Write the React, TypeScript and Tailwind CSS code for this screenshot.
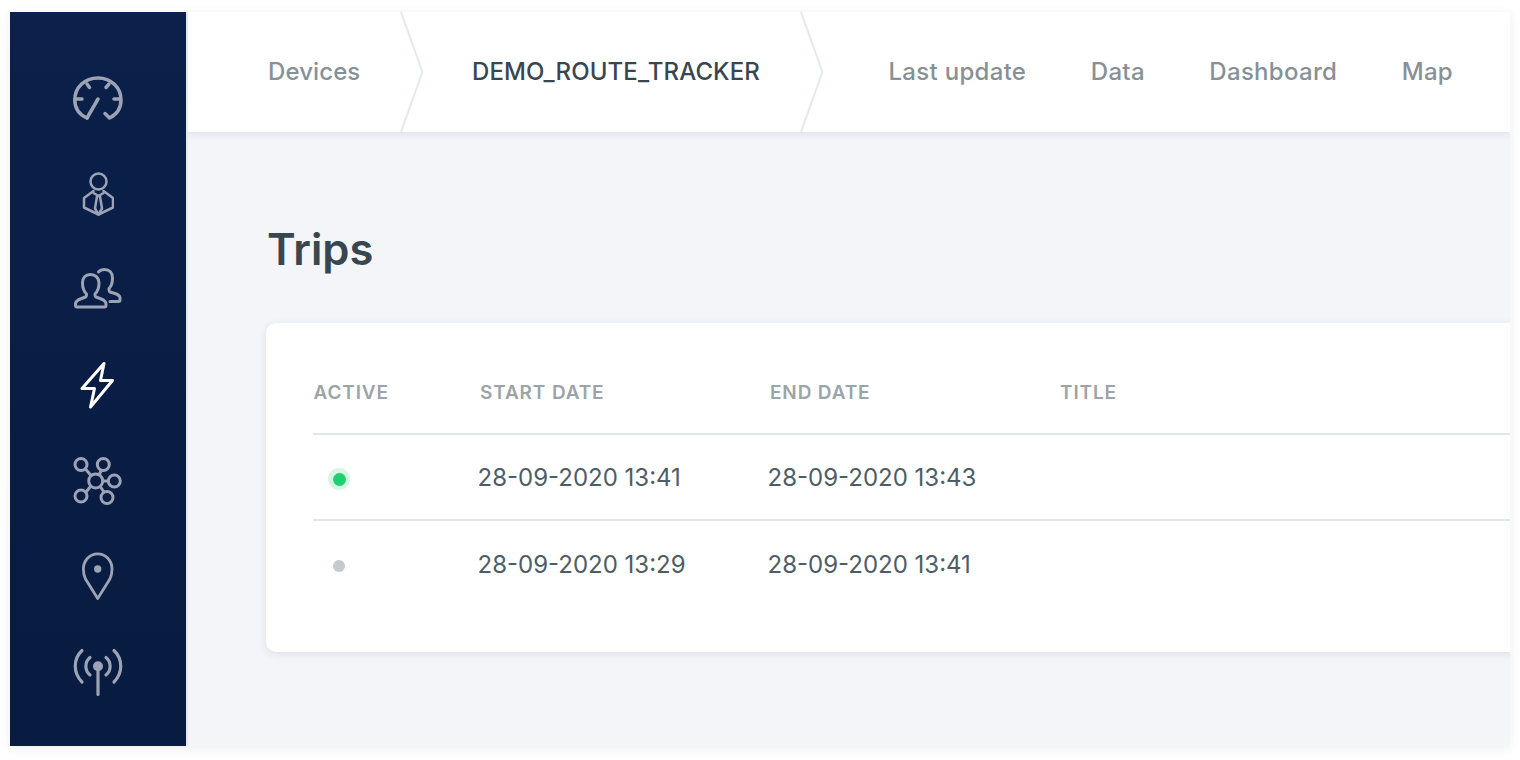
const stroke = "#9ba3b4";

function Gauge() {
  return (
    <svg width="50" height="46" viewBox="0 0 50 46" fill="none" stroke={stroke} strokeWidth="3.5" strokeLinecap="round" strokeLinejoin="round" className="overflow-visible">
      <path d="M14 42 C5 38 1.8 31 1.8 24 C1.8 11.500 11.500 1.900 25 1.900 C38 1.900 48 11.500 48 24 C48 31 44.500 38 36.500 42 L32 37.500" />
      <path d="M14 42 L25 23" />
      <path d="M14 8 L16.500 11.500 M36 8 L33 11.500 M2 23 L9 23 M41 23 L47 23" />
    </svg>
  );
}

function Person() {
  return (
    <svg width="32" height="45" viewBox="0 0 32 45" fill="none" stroke={stroke} strokeWidth="2.500" strokeLinejoin="round" strokeLinecap="round">
      <circle cx="16.500" cy="9.500" r="8" />
      <path d="M11.500 19 L2 26 V35.500 L16.500 42.500 L31 35.500 V26 L21.500 19" />
      <path d="M11.500 21 L16.500 24 L21.500 21" />
      <path d="M15 24.500 L13 36.500 L16.500 42.500 L20 36.500 L18 24.500" />
    </svg>
  );
}

function Users() {
  return (
    <svg width="50" height="44" viewBox="0 0 50 44" fill="none" stroke={stroke} strokeWidth="3" strokeLinejoin="round" strokeLinecap="round" className="overflow-visible">
      <path d="M4 39 H31.500 C32.500 39 33 38.500 33 37 V36 C33 33 30 31.500 27 30.500 L23 29 C22 28.600 22 28 22 26 C24.500 23.500 26 20 26 15 C26 10 22.500 6.400 17.500 6.400 C12.500 6.400 9.500 10 9.500 15 C9.500 20 11 23.500 13.500 26 C13.500 28 13.500 28.600 12.500 29 L8.500 30.500 C5.500 31.500 2.500 33 2.500 36 V37 C2.500 38.500 3 39 4 39 Z" />
      <path d="M25.500 4 C27 2.200 29 1.500 31.500 1.500 C36.500 1.500 39.500 5 39.500 10 C39.500 14 38.500 18 36 20.500 C36 23 36 23.500 37 24 L42 25.500 C45 26.500 47 28 47 30 V32 C47 33 46.500 33.500 45.500 33.500 H37" />
    </svg>
  );
}

function Bolt() {
  return (
    <svg width="38" height="50" viewBox="0 0 38 50" fill="none" stroke="#ffffff" strokeWidth="3" strokeLinejoin="round" strokeLinecap="round">
      <path d="M25 3.500 L3 28.500 H15.500 L11.500 47 L33.500 20.500 H21.500 Z" />
    </svg>
  );
}

function Network() {
  return (
    <svg width="50" height="50" viewBox="0 0 50 50" fill="none" stroke={stroke} strokeWidth="3">
      <circle cx="22.700" cy="25" r="7" />
      <circle cx="8" cy="8.500" r="6" />
      <circle cx="30.300" cy="8.500" r="6" />
      <circle cx="41.300" cy="25" r="6" />
      <circle cx="34" cy="41.500" r="6" />
      <circle cx="8" cy="40" r="6" />
      <path d="M12.500 13 L18 19.500 M28.500 14 L26 19 M30 25 L35 25 M27.500 31 L31 36 M13 36 L17.500 30.500" />
    </svg>
  );
}

function Pin() {
  return (
    <svg width="34" height="50" viewBox="0 0 34 50" fill="none" stroke={stroke} strokeWidth="2.800" strokeLinejoin="round">
      <path d="M16.700 47.500 L4.500 28 C2.800 24.500 2.400 22 2.400 18 C2.400 9.500 8.700 2.800 16.700 2.800 C24.700 2.800 31 9.500 31 18 C31 22 30.600 24.500 28.900 28 Z" />
      <circle cx="16.700" cy="18" r="3.700" fill={stroke} stroke="none" />
    </svg>
  );
}

function Antenna() {
  return (
    <svg width="50" height="50" viewBox="0 0 50 50" fill="none" stroke={stroke} strokeWidth="3.200" strokeLinecap="round">
      <circle cx="25" cy="19.250" r="5" fill={stroke} stroke="none" />
      <path d="M25 24 V47.500" />
      <path d="M9 3.500 C0 12 0 26 9 35 M41 3.500 C50 12 50 26 41 35" />
      <path d="M17 10.500 C11.500 15 11.500 23.500 17 28 M33 10.500 C38.500 15 38.500 23.500 33 28" />
    </svg>
  );
}

function Chevron() {
  return (
    <svg className="absolute right-[-23px] top-0 h-[120px] w-[24px]" viewBox="0 0 24 120" fill="none" stroke="#e6e9ea" strokeWidth="2">
      <path d="M1 0 L22.500 60 L1 120" />
    </svg>
  );
}

const icons = [Gauge, Person, Users, Bolt, Network, Pin, Antenna];
const rows = [
  { active: true, start: "28-09-2020 13:41", end: "28-09-2020 13:43" },
  { active: false, start: "28-09-2020 13:29", end: "28-09-2020 13:41" },
];

export default function App() {
  return (
    <div className="h-[760px] w-[1520px] overflow-hidden bg-white pl-[10px] pt-[12px] font-['Inter',sans-serif]">
      <div className="flex h-[734px] w-[1500px] overflow-hidden shadow-[0_2px_10px_rgba(30,40,70,0.08)]">
        <aside className="flex h-full w-[176px] shrink-0 flex-col items-center bg-gradient-to-b from-[#0b204a] to-[#081b40] pt-[39px]">
          {icons.map((Icon, i) => (
            <div key={i} className="flex h-[95.500px] w-full items-center justify-center">
              <Icon />
            </div>
          ))}
        </aside>
        <div className="flex min-w-0 flex-1 flex-col overflow-hidden border-l-2 border-[#e6e8ec] bg-[#f4f5f9]">
          <header className="z-10 flex h-[120px] shrink-0 items-center bg-white text-[24px] font-medium tracking-[0.1px] text-[#879195] shadow-[0_2px_8px_rgba(30,40,70,0.1)]">
            <div className="relative flex h-full w-[213px] shrink-0 items-center pl-[80px]">
              Devices
              <Chevron />
            </div>
            <div className="relative flex h-full w-[400px] shrink-0 items-center pl-[71px] text-[#38474f]">
              DEMO_ROUTE_TRACKER
              <Chevron />
            </div>
            <nav className="ml-[87.500px] flex gap-[64.500px] tracking-[0.3px]">
              <span>Last update</span>
              <span>Data</span>
              <span>Dashboard</span>
              <span>Map</span>
            </nav>
          </header>
          <main className="flex-1 pl-[79px] pt-[87px]">
            <h1 className="text-[43.500px] font-semibold leading-[60px] text-[#38474f]">Trips</h1>
            <section className="-ml-[1px] mt-[44px] h-[329px] w-[1400px] rounded-[10px] bg-white pl-[47px] pt-[45px] shadow-[0_2px_8px_rgba(30,40,70,0.1)]">
              <div className="flex h-[67px] items-start border-b-2 border-[#e3e6e7] pl-[0.500px] text-[19px] font-semibold leading-[50px] tracking-[0.85px] text-[#9ca4a7]">
                <span className="w-[166.500px]">ACTIVE</span>
                <span className="w-[290px]">START DATE</span>
                <span className="w-[290px]">END DATE</span>
                <span>TITLE</span>
              </div>
              {rows.map((r, i) => (
                <div key={i} className={`flex h-[86px] items-center pt-[2px] text-[24px] text-[#4e5d65] ${i === 0 ? "border-b-2 border-[#e3e6e7]" : ""}`}>
                  <div className="flex w-[164.500px] pl-[15px] pt-[2px]">
                    {r.active ? (
                      <span className="flex h-[22px] w-[22px] items-center justify-center rounded-full bg-[#d8f5e4]">
                        <span className="h-[13px] w-[13px] rounded-full bg-[#20cf70]" />
                      </span>
                    ) : (
                      <span className="flex h-[22px] w-[22px] items-center justify-center">
                        <span className="h-[12px] w-[12px] rounded-full bg-[#c4cacd]" />
                      </span>
                    )}
                  </div>
                  <span className="w-[290px]">{r.start}</span>
                  <span>{r.end}</span>
                </div>
              ))}
            </section>
          </main>
        </div>
      </div>
    </div>
  );
}
